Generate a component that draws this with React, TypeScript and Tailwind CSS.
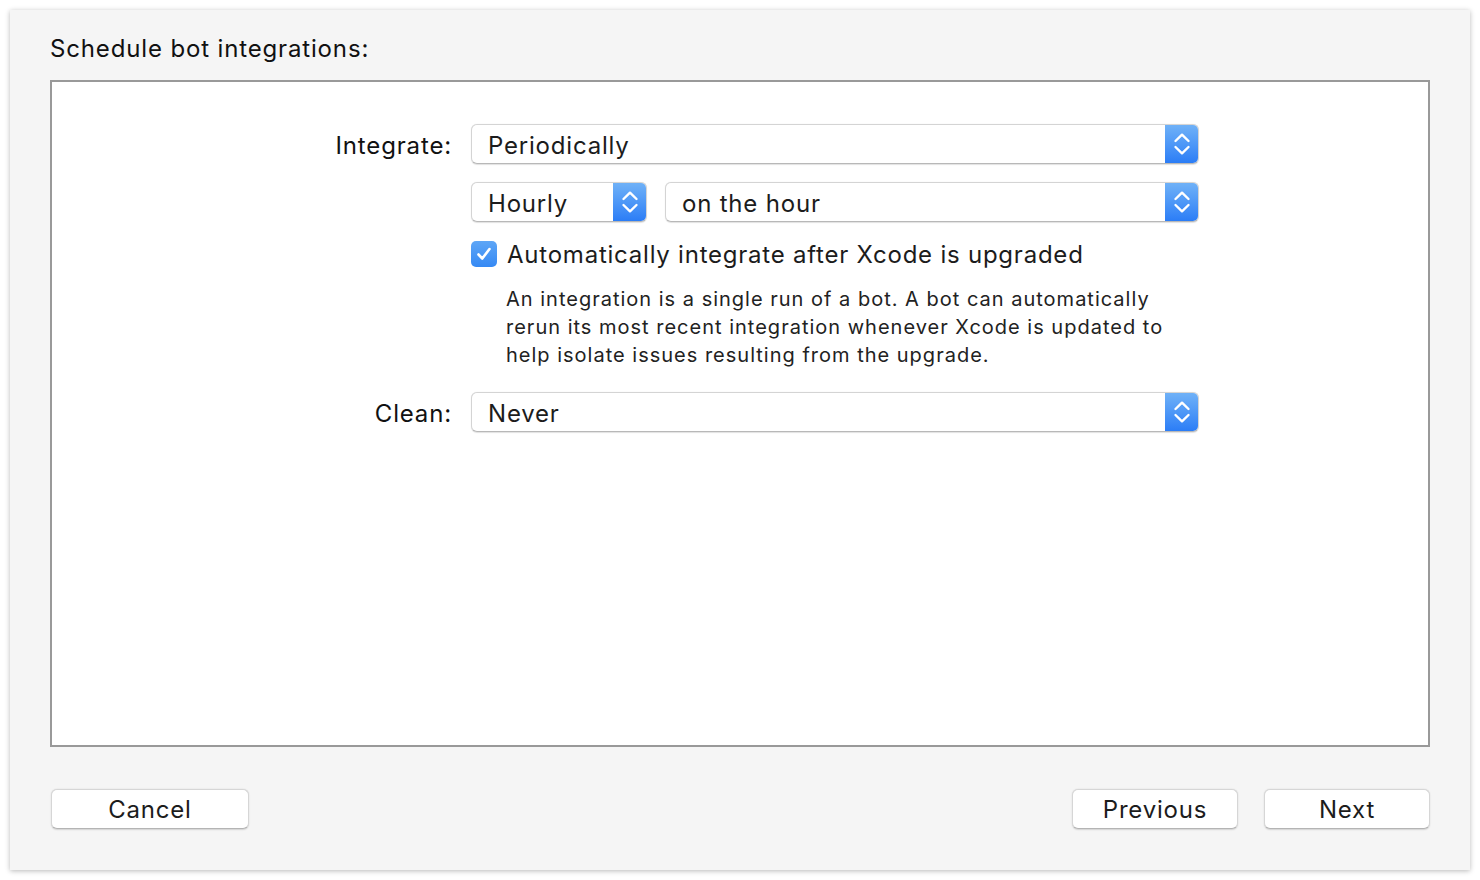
import React from "react";

const font = { fontFamily: "Inter, 'Noto Sans', sans-serif" };

function Chevrons() {
  return (
    <svg width="18" height="26" viewBox="0 0 18 26" fill="none">
      <path d="M2.5 10 L9 3.7 L15.5 10" stroke="white" strokeWidth="2.4" strokeLinecap="round" strokeLinejoin="round" />
      <path d="M2.5 16 L9 22.3 L15.5 16" stroke="white" strokeWidth="2.4" strokeLinecap="round" strokeLinejoin="round" />
    </svg>
  );
}

function Popup({ label, width }: { label: string; width: string }) {
  return (
    <div
      className={`${width} h-[40px] flex items-stretch rounded-[6px] bg-white border border-[#d4d4d4] border-b-[#b8b8b8] shadow-[0_0.5px_1px_rgba(0,0,0,0.12)] overflow-hidden`}
    >
      <div className="flex-1 flex items-center pl-[16px] pt-[3px] text-[24px] tracking-[0.8px] text-[#1c1c1c] leading-none">{label}</div>
      <div className="w-[33px] flex items-center justify-center bg-gradient-to-b from-[#6fb1f7] to-[#2b7df6]">
        <Chevrons />
      </div>
    </div>
  );
}

function Button({ label, width }: { label: string; width: string }) {
  return (
    <div
      className={`${width} h-[40px] flex items-center justify-center pt-[2px] rounded-[6px] bg-white border border-[#d6d6d6] border-b-[#b4b4b4] shadow-[0_0.5px_1.5px_rgba(0,0,0,0.15)] text-[24px] tracking-[0.8px] text-[#1c1c1c]`}
    >
      {label}
    </div>
  );
}

export default function App() {
  return (
    <div className="w-[1480px] h-[880px] bg-white p-[10px]" style={font}>
      <div className="w-[1460px] h-[860px] bg-[#f5f5f5] shadow-[0_1px_5px_rgba(0,0,0,0.28)] flex flex-col px-[40px]">
        <div className="h-[70px] flex items-center pt-[8px] text-[24px] tracking-[0.85px] text-[#111]">Schedule bot integrations:</div>
        <div className="h-[667px] border-2 border-[#999999] bg-white pt-[42px]">
          <div className="flex flex-col">
            <div className="flex items-center h-[40px]">
              <div className="w-[400px] text-right text-[24px] tracking-[0.85px] text-[#111] pt-[3px]">Integrate:</div>
              <div className="ml-[19px]">
                <Popup label="Periodically" width="w-[728px]" />
              </div>
            </div>
            <div className="flex items-center h-[40px] mt-[18px] ml-[419px] gap-[18px]">
              <Popup label="Hourly" width="w-[176px]" />
              <Popup label="on the hour" width="w-[534px]" />
            </div>
            <div className="flex items-center mt-[19px] ml-[419px] h-[26px]">
              <div className="w-[26px] h-[26px] rounded-[5px] bg-gradient-to-b from-[#5ea6f6] to-[#3589f4] flex items-center justify-center">
                <svg width="18" height="18" viewBox="0 0 18 18" fill="none">
                  <path d="M3.5 9.5 L7.3 13.5 L14.5 4" stroke="white" strokeWidth="2.6" strokeLinecap="round" strokeLinejoin="round" />
                </svg>
              </div>
              <div className="ml-[10px] text-[24px] tracking-[0.77px] text-[#1c1c1c] whitespace-nowrap pt-[2px]">
                Automatically integrate after Xcode is upgraded
              </div>
            </div>
            <div className="ml-[454px] mt-[18px] w-[760px] text-[20px] tracking-[1px] leading-[28px] text-[#222]">
              An integration is a single run of a bot. A bot can automatically
              <br />
              rerun its most recent integration whenever Xcode is updated to
              <br />
              help isolate issues resulting from the upgrade.
            </div>
            <div className="flex items-center h-[40px] mt-[23px]">
              <div className="w-[400px] text-right text-[24px] tracking-[0.85px] text-[#111] pt-[3px]">Clean:</div>
              <div className="ml-[19px]">
                <Popup label="Never" width="w-[728px]" />
              </div>
            </div>
          </div>
        </div>
        <div className="flex items-center mt-[42px]">
          <Button label="Cancel" width="w-[198px] ml-[1px]" />
          <div className="flex-1" />
          <Button label="Previous" width="w-[166px]" />
          <div className="w-[26px]" />
          <Button label="Next" width="w-[166px]" />
        </div>
      </div>
    </div>
  );
}
